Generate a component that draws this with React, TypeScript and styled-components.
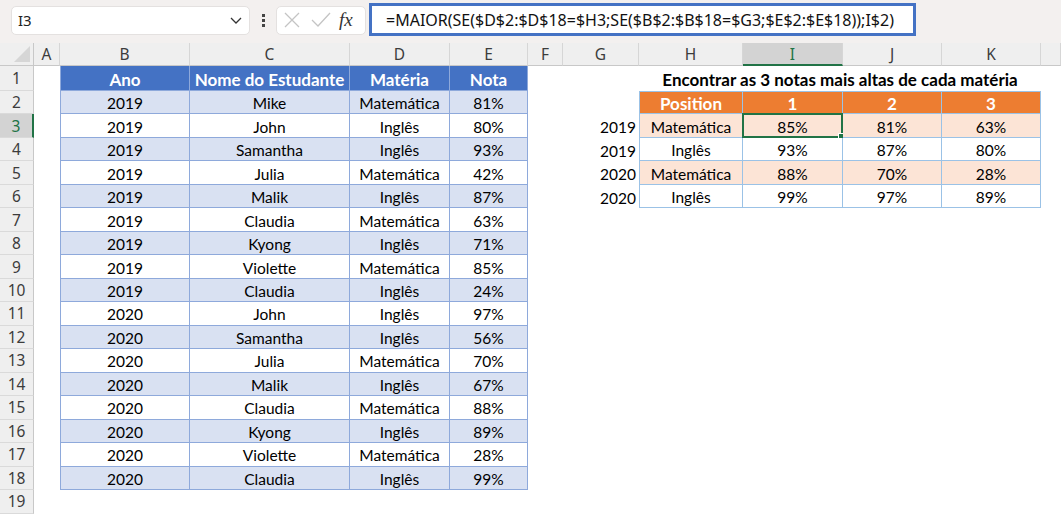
import React from "react";
import styled, { createGlobalStyle, css } from "styled-components";

const GlobalStyle = createGlobalStyle`
  html, body {
    margin: 0;
    padding: 0;
    background: #ffffff;
  }
  body {
    font-family: "Lato", "Liberation Sans", sans-serif;
    overflow: hidden;
  }
`;

// widths: row header, then A..K; L takes the rest
const COLS = [34, 26, 130, 160, 100, 78, 35, 76, 104, 100, 99, 99];
const LETTERS = ["A", "B", "C", "D", "E", "F", "G", "H", "I", "J", "K", "L"];
const ROW_H = 23.47;
const GREEN = "#217346";

const students: [string, string, string, string][] = [
  ["2019", "Mike", "Matemática", "81%"],
  ["2019", "John", "Inglês", "80%"],
  ["2019", "Samantha", "Inglês", "93%"],
  ["2019", "Julia", "Matemática", "42%"],
  ["2019", "Malik", "Inglês", "87%"],
  ["2019", "Claudia", "Matemática", "63%"],
  ["2019", "Kyong", "Inglês", "71%"],
  ["2019", "Violette", "Matemática", "85%"],
  ["2019", "Claudia", "Inglês", "24%"],
  ["2020", "John", "Inglês", "97%"],
  ["2020", "Samantha", "Inglês", "56%"],
  ["2020", "Julia", "Matemática", "70%"],
  ["2020", "Malik", "Inglês", "67%"],
  ["2020", "Claudia", "Matemática", "88%"],
  ["2020", "Kyong", "Inglês", "89%"],
  ["2020", "Violette", "Matemática", "28%"],
  ["2020", "Claudia", "Inglês", "99%"],
];

const top3: [string, string, string, string, string][] = [
  ["2019", "Matemática", "85%", "81%", "63%"],
  ["2019", "Inglês", "93%", "87%", "80%"],
  ["2020", "Matemática", "88%", "70%", "28%"],
  ["2020", "Inglês", "99%", "97%", "89%"],
];

type Variant =
  | "plain"
  | "blueHead"
  | "blueBand"
  | "blueWhite"
  | "orangeHead"
  | "orangeBand"
  | "orangeWhite";

export default function App() {
  const rows: React.ReactNode[] = [];

  for (let r = 1; r <= 19; r++) {
    rows.push(
      <RowHead key={`h${r}`} $active={r === 3}>
        {r}
      </RowHead>
    );
    for (let c = 0; c < LETTERS.length; c++) {
      const key = `${r}-${c}`;
      // title spans H..K on row 1
      if (r === 1 && c === 7) {
        rows.push(
          <TitleCell key={key}>
            Encontrar as 3 notas mais altas de cada matéria
          </TitleCell>
        );
        c += 3;
        continue;
      }

      let text = "";
      let variant: Variant = "plain";
      let align: "center" | "right" = "center";

      if (c >= 1 && c <= 4) {
        if (r === 1) {
          text = ["Ano", "Nome do Estudante", "Matéria", "Nota"][c - 1];
          variant = "blueHead";
        } else if (r <= 18) {
          text = students[r - 2][c - 1];
          variant = r % 2 === 0 ? "blueBand" : "blueWhite";
        }
      }

      if (r >= 2 && r <= 6 && c >= 6 && c <= 10) {
        if (r === 2) {
          if (c >= 7) {
            text = ["Position", "1", "2", "3"][c - 7];
            variant = "orangeHead";
          }
        } else {
          const row = top3[r - 3];
          if (c === 6) {
            text = row[0];
            align = "right";
          } else {
            text = row[c - 6];
            variant = r % 2 === 1 ? "orangeBand" : "orangeWhite";
          }
        }
      }

      rows.push(
        <Cell
          key={key}
          $variant={variant}
          $align={align}
          $first={c === 1 || c === 7}
          $top={r === 2 && c >= 7 && c <= 10}
        >
          {text}
          {r === 3 && c === 8 && (
            <Selection>
              <Handle />
            </Selection>
          )}
        </Cell>
      );
    }
  }

  return (
    <Window>
      <GlobalStyle />
      <TopBar>
        <NameBox>
          <span>I3</span>
          <svg width="14" height="14" viewBox="0 0 14 14">
            <polyline
              points="2,5 7,10 12,5"
              fill="none"
              stroke="#333"
              strokeWidth="1.3"
            />
          </svg>
        </NameBox>
        <Dots>
          <i />
          <i />
          <i />
        </Dots>
        <FxBox>
          <svg width="20" height="20" viewBox="0 0 20 20">
            <path d="M3 3 L17 17 M17 3 L3 17" stroke="#c4c4c4" strokeWidth="1.3" />
          </svg>
          <svg width="22" height="20" viewBox="0 0 22 20">
            <polyline
              points="2,10 8,16 20,3"
              fill="none"
              stroke="#c4c4c4"
              strokeWidth="1.3"
            />
          </svg>
          <Fx>fx</Fx>
        </FxBox>
        <Formula>=MAIOR(SE($D$2:$D$18=$H3;SE($B$2:$B$18=$G3;$E$2:$E$18));I$2)</Formula>
      </TopBar>
      <Sheet>
        <Corner>
          <svg width="18" height="18" viewBox="0 0 18 18">
            <polygon points="17,1 17,17 1,17" fill="#d6d6d6" />
          </svg>
        </Corner>
        {LETTERS.map((l) => (
          <ColHead key={l} $active={l === "I"}>
            {l === "L" ? "" : l}
          </ColHead>
        ))}
        {rows}
      </Sheet>
    </Window>
  );
}

const Window = styled.div`
  width: 1061px;
  height: 514px;
  display: flex;
  flex-direction: column;
  overflow: hidden;
`;

const TopBar = styled.div`
  height: 43px;
  flex: 0 0 43px;
  background: #f3f0ef;
  display: flex;
  align-items: center;
  padding-left: 11px;
  box-sizing: border-box;
  font-family: "Noto Sans", "Open Sans", sans-serif;
`;

const NameBox = styled.div`
  width: 239px;
  height: 29px;
  margin-top: -3px;
  box-sizing: border-box;
  background: #ffffff;
  border: 1px solid #e4e1e0;
  border-radius: 5px;
  display: flex;
  align-items: center;
  justify-content: space-between;
  padding: 0 6px 0 6px;
  font-size: 15px;
  color: #222;
`;

const Dots = styled.div`
  width: 26px;
  display: flex;
  flex-direction: column;
  align-items: center;
  gap: 2px;
  margin-top: -3px;

  i {
    width: 3px;
    height: 3px;
    background: #444;
    display: block;
  }
`;

const FxBox = styled.div`
  width: 90px;
  height: 29px;
  margin-top: -3px;
  box-sizing: border-box;
  background: #ffffff;
  border: 1px solid #e4e1e0;
  border-radius: 5px;
  display: flex;
  align-items: center;
  gap: 8px;
  padding-left: 5px;
`;

const Fx = styled.span`
  font-family: "Liberation Serif", serif;
  font-style: italic;
  font-size: 19px;
  color: #333;
  margin-left: -1px;
`;

const Formula = styled.div`
  margin-left: 3px;
  width: 547px;
  height: 33px;
  margin-top: -4px;
  box-sizing: border-box;
  border: 3px solid #4472c4;
  background: #ffffff;
  display: flex;
  align-items: center;
  padding-left: 14px;
  font-size: 16px;
  color: #111;
  white-space: nowrap;
`;

const Sheet = styled.div`
  flex: 1;
  display: grid;
  grid-template-columns: ${COLS.map((w) => `${w}px`).join(" ")} 1fr;
  grid-template-rows: 23px 25px repeat(17, ${ROW_H}px) 1fr;
  background: #ffffff;
`;

const headBase = css`
  background: #efefef;
  color: #3c3c3c;
  font-family: "Noto Sans", "Open Sans", sans-serif;
  font-size: 15.5px;
  display: flex;
  align-items: center;
  justify-content: center;
  box-sizing: border-box;
`;

const Corner = styled.div`
  ${headBase};
  border-right: 1px solid #c8c8c8;
  border-bottom: 1px solid #c8c8c8;
  justify-content: flex-end;
  align-items: flex-end;
  padding: 0 2px 2px 0;
`;

const ColHead = styled.div<{ $active: boolean }>`
  ${headBase};
  border-right: 1px solid #d6d6d6;
  border-bottom: ${(p) => (p.$active ? `2px solid ${GREEN}` : "1px solid #c8c8c8")};
  ${(p) =>
    p.$active &&
    css`
      background: #d3d3d3;
      color: ${GREEN};
    `}
`;

const RowHead = styled.div<{ $active: boolean }>`
  ${headBase};
  border-bottom: 1px solid #dadada;
  border-right: ${(p) => (p.$active ? `2px solid ${GREEN}` : "1px solid #c8c8c8")};
  ${(p) =>
    p.$active &&
    css`
      background: #d3d3d3;
      color: ${GREEN};
    `}
`;

const variants: Record<Variant, ReturnType<typeof css>> = {
  plain: css``,
  blueHead: css`
    background: #4472c4;
    color: #ffffff;
    font-weight: 700;
    font-size: 17px;
    border-right: 1px solid #8ea9db;
    border-bottom: 1px solid #8ea9db;
  `,
  blueBand: css`
    background: #d9e1f2;
    border-right: 1px solid #8ea9db;
    border-bottom: 1px solid #8ea9db;
  `,
  blueWhite: css`
    background: #ffffff;
    border-right: 1px solid #8ea9db;
    border-bottom: 1px solid #8ea9db;
  `,
  orangeHead: css`
    background: #ed7d31;
    color: #ffffff;
    font-weight: 700;
    font-size: 17px;
    border-right: 1px solid #9bc2e6;
    border-bottom: 1px solid #9bc2e6;
  `,
  orangeBand: css`
    background: #fce4d6;
    border-right: 1px solid #9bc2e6;
    border-bottom: 1px solid #9bc2e6;
  `,
  orangeWhite: css`
    background: #ffffff;
    border-right: 1px solid #9bc2e6;
    border-bottom: 1px solid #9bc2e6;
  `,
};

const Cell = styled.div<{
  $variant: Variant;
  $align: "center" | "right";
  $first: boolean;
  $top: boolean;
}>`
  position: relative;
  box-sizing: border-box;
  display: flex;
  align-items: center;
  justify-content: ${(p) => (p.$align === "right" ? "flex-end" : "center")};
  padding: 2px 3px 0;
  font-size: 15.5px;
  color: #000;
  white-space: nowrap;
  ${(p) => variants[p.$variant]};
  ${(p) =>
    p.$first &&
    p.$variant !== "plain" &&
    css`
      border-left: 1px solid
        ${p.$variant.startsWith("blue") ? "#8ea9db" : "#9bc2e6"};
    `}
  ${(p) =>
    p.$top &&
    css`
      border-top: 1px solid #9bc2e6;
    `}
`;

const TitleCell = styled.div`
  grid-column: span 4;
  display: flex;
  align-items: center;
  justify-content: center;
  padding-top: 1px;
  font-size: 17px;
  font-weight: 700;
  color: #000;
  white-space: nowrap;
`;

const Selection = styled.div`
  position: absolute;
  left: -1px;
  top: -1px;
  right: -1px;
  bottom: -1px;
  border: 2px solid ${GREEN};
  pointer-events: none;
`;

const Handle = styled.div`
  position: absolute;
  right: -4px;
  bottom: -4px;
  width: 5px;
  height: 5px;
  background: ${GREEN};
  border: 1px solid #ffffff;
`;
